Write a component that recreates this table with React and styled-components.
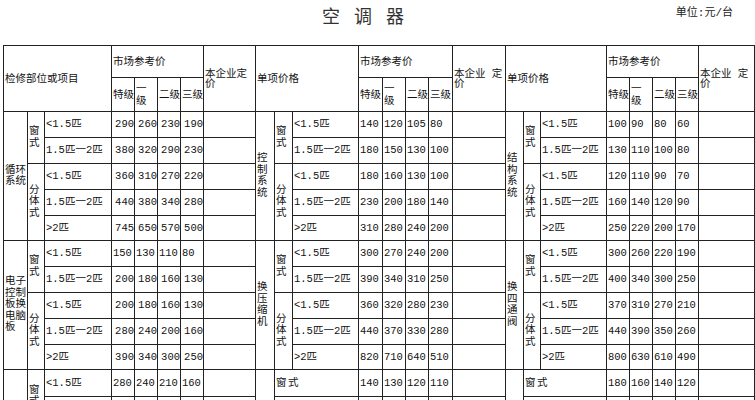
import React from 'react';
import styled, { createGlobalStyle } from 'styled-components';

const GlobalStyle = createGlobalStyle`
  html, body {
    margin: 0;
    padding: 0;
    background: #fff;
    overflow: hidden;
  }
`;

const Page = styled.div`
  width: 755px;
  height: 400px;
  overflow: hidden;
  background: #fff;
  color: #111;
  font-family: 'Liberation Mono', 'Noto Sans CJK SC', monospace;
`;

const TitleBar = styled.header`
  display: grid;
  grid-template-columns: 322px 1fr auto;
  align-items: start;
  height: 45px;
  padding-right: 22px;
  box-sizing: border-box;
`;

const Title = styled.h1`
  grid-column: 2;
  margin: 5px 0 0;
  font-family: 'Noto Sans CJK SC', sans-serif;
  font-weight: 400;
  font-size: 18px;
  line-height: 20px;
  letter-spacing: 14px;
  color: #333;
`;

const Unit = styled.span`
  margin-top: 7px;
  font-size: 11px;
  line-height: 12px;
  color: #222;
`;

const Table = styled.table`
  margin-left: 3px;
  width: 751px;
  border-collapse: collapse;
  table-layout: fixed;
`;

const Row = styled.tr`
  height: ${(p) => p.$h}px;
`;

const Cell = styled.td`
  border: 1px solid #222;
  padding: 0 1px;
  font-size: 10.5px;
  line-height: ${(p) => p.$lh || 11}px;
  vertical-align: middle;
  text-align: ${(p) => p.$align || 'left'};
  letter-spacing: ${(p) => p.$ls || 0}px;
  white-space: ${(p) => (p.$nowrap ? 'nowrap' : 'normal')};
  word-break: break-all;
  overflow: hidden;
`;

const HeadCell = styled(Cell)`
  line-height: ${(p) => p.$lh || 10}px;
`;

const SideCell = styled(Cell)`
  line-height: 11.5px;
  padding: 0 1px;
`;

const PriceCell = styled(Cell)`
  white-space: nowrap;
  padding: 0 ${(p) => (p.$align === 'right' ? 0 : 1)}px;
`;

const widths = [
  24, 17, 67, 23, 23, 23, 23, 52,
  19, 18, 66, 24, 23, 23, 24, 53,
  18, 17, 66, 23, 23, 23, 23, 56,
];

const sizes = ['<1.5匹', '1.5匹一2匹', '<1.5匹', '1.5匹一2匹', '>2匹'];

const L = 'left';
const R = 'right';

const sections = [
  [
    {
      system: '循环系统',
      align: [R, R, R, R, R],
      prices: [
        [290, 260, 230, 190],
        [380, 320, 290, 230],
        [360, 310, 270, 220],
        [440, 380, 340, 280],
        [745, 650, 570, 500],
      ],
    },
    {
      system: '控制系统',
      align: [L, L, L, L, L],
      prices: [
        [140, 120, 105, 80],
        [180, 150, 130, 100],
        [180, 160, 130, 100],
        [230, 200, 180, 140],
        [310, 280, 240, 200],
      ],
    },
    {
      system: '结构系统',
      align: [L, L, L, L, L],
      prices: [
        [100, 90, 80, 60],
        [130, 110, 100, 80],
        [120, 110, 90, 70],
        [160, 140, 120, 90],
        [250, 220, 200, 170],
      ],
    },
  ],
  [
    {
      system: '电子控制板换电脑板',
      align: [L, R, R, R, R],
      prices: [
        [150, 130, 110, 80],
        [200, 180, 160, 130],
        [200, 180, 160, 130],
        [280, 240, 200, 160],
        [390, 340, 300, 250],
      ],
    },
    {
      system: '换压缩机',
      align: [L, L, L, L, L],
      prices: [
        [300, 270, 240, 200],
        [390, 340, 310, 250],
        [360, 320, 280, 230],
        [440, 370, 330, 280],
        [820, 710, 640, 510],
      ],
    },
    {
      system: '换四通阀',
      align: [L, L, L, L, L],
      prices: [
        [300, 260, 220, 190],
        [400, 340, 300, 250],
        [370, 310, 270, 210],
        [440, 390, 350, 260],
        [800, 630, 610, 490],
      ],
    },
  ],
];

const groupHeads = ['检修部位或项目', '单项价格', '单项价格'];
const ownPrice = ['本企业定价', '本企业 定价', '本企业 定价'];

function Prices({ values, align }) {
  return values.map((v, i) => (
    <PriceCell key={i} $align={align}>
      {v}
    </PriceCell>
  ));
}

function BlockRows({ groups }) {
  return sizes.map((size, i) => (
    <Row key={i} $h={i === 4 ? 25 : 26}>
      {groups.map((g, gi) => (
        <React.Fragment key={gi}>
          {i === 0 && <SideCell rowSpan={5}>{g.system}</SideCell>}
          {i === 0 && <SideCell rowSpan={2}>窗式</SideCell>}
          {i === 2 && <SideCell rowSpan={3}>分体式</SideCell>}
          <Cell $nowrap>{size}</Cell>
          <Prices values={g.prices[i]} align={g.align[i]} />
          <Cell />
        </React.Fragment>
      ))}
    </Row>
  ));
}

export default function App() {
  return (
    <Page>
      <GlobalStyle />
      <TitleBar>
        <Title>空调器</Title>
        <Unit>单位:元/台</Unit>
      </TitleBar>
      <Table>
        <colgroup>
          {widths.map((w, i) => (
            <col key={i} style={{ width: w }} />
          ))}
        </colgroup>
        <thead>
          <Row $h={32}>
            {groupHeads.map((h, i) => (
              <React.Fragment key={i}>
                <HeadCell colSpan={3} rowSpan={2}>
                  {h}
                </HeadCell>
                <HeadCell colSpan={4}>市场参考价</HeadCell>
                <HeadCell rowSpan={2}>{ownPrice[i]}</HeadCell>
              </React.Fragment>
            ))}
          </Row>
          <Row $h={34}>
            {groupHeads.map((h, i) => (
              <React.Fragment key={i}>
                <HeadCell $nowrap>特级</HeadCell>
                <HeadCell $lh={12}>
                  一
                  <br />
                  级
                </HeadCell>
                <HeadCell $nowrap>二级</HeadCell>
                <HeadCell $nowrap>三级</HeadCell>
              </React.Fragment>
            ))}
          </Row>
        </thead>
        <tbody>
          {sections.map((groups, si) => (
            <BlockRows key={si} groups={groups} />
          ))}
          <Row $h={27}>
            <SideCell rowSpan={2} />
            <SideCell rowSpan={2}>窗式</SideCell>
            <Cell $nowrap>{'<1.5匹'}</Cell>
            <Prices values={[280, 240, 210, 160]} align={L} />
            <Cell />
            <SideCell rowSpan={2} />
            <Cell colSpan={2} $ls={1.5} $nowrap>
              窗式
            </Cell>
            <Prices values={[140, 130, 120, 110]} align={L} />
            <Cell />
            <SideCell rowSpan={2} />
            <Cell colSpan={2} $ls={1.5} $nowrap>
              窗式
            </Cell>
            <Prices values={[180, 160, 140, 120]} align={L} />
            <Cell />
          </Row>
          <Row $h={26}>
            <Cell $nowrap>1.5匹一2匹</Cell>
            {Array.from({ length: 5 }, (_, i) => (
              <Cell key={`a${i}`} />
            ))}
            <Cell colSpan={2} />
            {Array.from({ length: 5 }, (_, i) => (
              <Cell key={`b${i}`} />
            ))}
            <Cell colSpan={2} />
            {Array.from({ length: 5 }, (_, i) => (
              <Cell key={`c${i}`} />
            ))}
          </Row>
        </tbody>
      </Table>
    </Page>
  );
}
